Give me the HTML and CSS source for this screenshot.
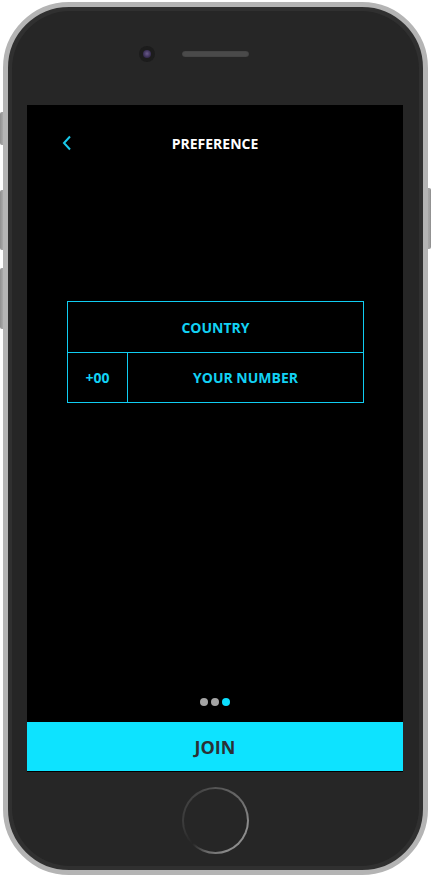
FILE: index.html
```html
<!DOCTYPE html>
<html lang="en">
<head>
<meta charset="utf-8">
<title>Preference</title>
<link rel="stylesheet" href="styles.css">
</head>
<body>
<div class="device">
  <span class="side-btn side-mute"></span>
  <span class="side-btn side-vol-up"></span>
  <span class="side-btn side-vol-down"></span>
  <span class="side-btn side-power"></span>
  <div class="phone">
    <div class="face">
      <div class="top">
        <span class="camera"><span class="lens"></span></span>
        <span class="speaker"></span>
      </div>
      <div class="screen">
        <header class="header">
          <button class="back" aria-label="Back">
            <svg width="10" height="16" viewBox="0 0 10 16"><path d="M8 1.5 L2 8 L8 14.5" fill="none" stroke="#19c9ea" stroke-width="2"/></svg>
          </button>
          <h1 class="title">PREFERENCE</h1>
        </header>
        <div class="form">
          <div class="row row-country">COUNTRY</div>
          <div class="row row-phone">
            <div class="cell cell-code">+00</div>
            <div class="cell cell-number">YOUR NUMBER</div>
          </div>
        </div>
        <div class="dots">
          <span class="dot"></span>
          <span class="dot"></span>
          <span class="dot dot-active"></span>
        </div>
        <button class="join">JOIN</button>
      </div>
      <div class="bottom">
        <div class="home"><div class="home-inner"></div></div>
      </div>
    </div>
  </div>
</div>
</body>
</html>
```
FILE: styles.css
```css
* { box-sizing: border-box; }
html, body { margin: 0; padding: 0; background: #ffffff; }
body { font-family: "Open Sans", "Liberation Sans", sans-serif; }

.device {
  position: relative;
  width: 431px;
  height: 877px;
  padding: 2px 3px 2px 3px;
}

.side-btn {
  position: absolute;
  width: 5px;
  background: linear-gradient(to right, #8f8f8f, #a9a9a9 60%, #8a8a8a);
  border-radius: 2px;
}
.side-mute { left: 0; top: 112px; height: 33px; }
.side-vol-up { left: 0; top: 190px; height: 60px; }
.side-vol-down { left: 0; top: 268px; height: 61px; }
.side-power { right: 0; top: 188px; height: 61px; }

.phone {
  position: relative;
  width: 425px;
  height: 873px;
  border: 5px solid #b4b4b4;
  border-radius: 66px;
  background: #303030;
  padding: 4px;
}

.face {
  width: 100%;
  height: 100%;
  border-radius: 58px;
  background: #262626;
  display: flex;
  flex-direction: column;
}

.top {
  height: 94px;
  display: flex;
  align-items: center;
  padding: 0 0 8px 127px;
  gap: 27px;
}
.camera {
  width: 16px;
  height: 16px;
  border-radius: 50%;
  background: #1c1c1c;
  display: flex;
  align-items: center;
  justify-content: center;
}
.lens {
  width: 8px;
  height: 8px;
  border-radius: 50%;
  background: radial-gradient(circle at 50% 45%, #6a5a8a 0, #3a2f55 60%, #241d33 100%);
}
.speaker {
  width: 67px;
  height: 6px;
  border-radius: 3px;
  background: #4a4a4a;
  box-shadow: inset 0 0 1px #222;
}

.screen {
  width: 376px;
  height: 667px;
  margin-left: 15px;
  background: #000000;
  display: flex;
  flex-direction: column;
  border-bottom: 1px solid #000;
}

.header {
  height: 76px;
  position: relative;
  display: flex;
  align-items: center;
  justify-content: center;
}
.back {
  position: absolute;
  left: 35px;
  top: 30px;
  padding: 0;
  border: 0;
  background: none;
  display: flex;
}
.title {
  margin: 0;
  color: #ffffff;
  font-size: 14px;
  font-weight: 700;
  letter-spacing: 0;
}

.form {
  margin: 120px 0 0 40px;
  width: 297px;
  border: 1px solid #10cdf2;
  color: #12d2f4;
  font-size: 14px;
  font-weight: 700;
}
.row {
  height: 50px;
  display: flex;
  align-items: center;
  justify-content: center;
}
.row-country { height: 51px; border-bottom: 1px solid #10cdf2; }
.row-phone { height: 49px; justify-content: flex-start; }
.cell {
  height: 100%;
  display: flex;
  align-items: center;
  justify-content: center;
}
.cell-code { width: 60px; border-right: 1px solid #10cdf2; }
.cell-number { flex: 1; }

.dots {
  margin-top: auto;
  display: flex;
  justify-content: center;
  gap: 3px;
  padding-bottom: 16px;
}
.dot {
  width: 8px;
  height: 8px;
  border-radius: 50%;
  background: #a4a4a4;
}
.dot-active { background: #0bdfff; }

.join {
  height: 49px;
  border: 0;
  margin: 0;
  padding: 0;
  background: #0de3ff;
  color: #2b3035;
  font-family: "Open Sans", "Liberation Sans", sans-serif;
  font-size: 18px;
  font-weight: 700;
  width: 100%;
}

.bottom {
  flex: 1;
  display: flex;
  justify-content: center;
  padding-top: 15px;
}
.home {
  width: 67px;
  height: 67px;
  border-radius: 50%;
  padding: 2px;
  background: conic-gradient(from 0deg, #555 0deg, #6a6a6a 50deg, #8e8e8e 100deg, #8a8a8a 160deg, #6a6a6a 195deg, #262626 225deg, #3a3a3a 260deg, #3e3e3e 290deg, #444 330deg, #555 360deg);
}
.home-inner {
  width: 100%;
  height: 100%;
  border-radius: 50%;
  background: #262626;
}
```
